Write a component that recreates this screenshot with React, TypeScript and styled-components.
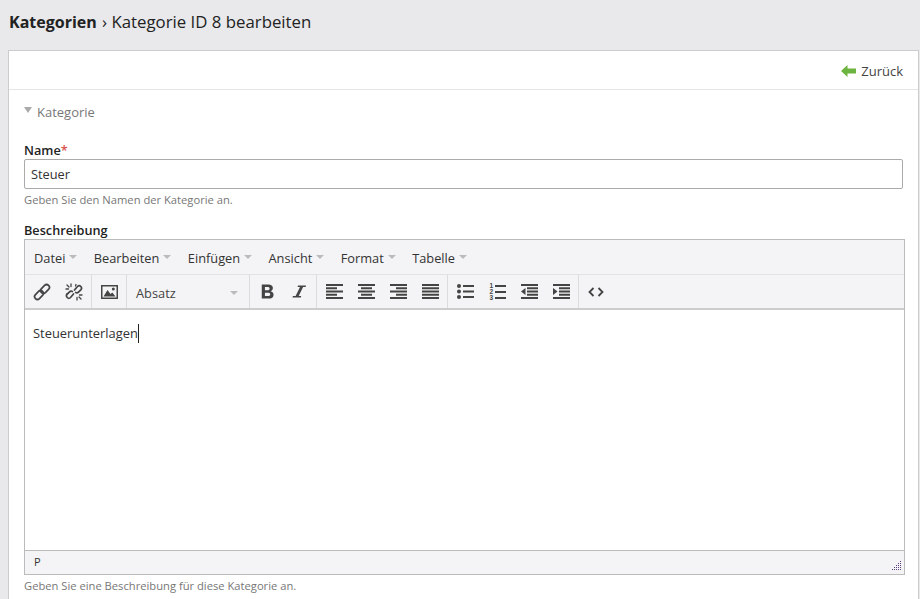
import React from 'react';
import styled, { createGlobalStyle } from 'styled-components';

const GlobalStyle = createGlobalStyle`
	html, body {
		margin: 0;
		padding: 0;
		height: 100%;
		overflow: hidden;
		background: #e9e9eb;
		font-family: "Open Sans", "Noto Sans", sans-serif;
		color: #333;
	}
`;

const Page = styled.div`
	height: 599px;
	overflow: hidden;
	padding: 0 1px 0 8px;
`;

const Title = styled.h1`
	margin: 0;
	height: 50px;
	padding: 11px 0 0 1px;
	box-sizing: border-box;
	font-size: 16.8px;
	line-height: 21px;
	font-weight: 400;
	color: #222;
	b {
		font-size: 16px;
		font-weight: 700;
		margin-right: 1px;
	}
`;

const Card = styled.div`
	background: #fff;
	border: 1px solid #ccc;
	border-bottom: 0;
	height: 549px;
`;

const ActionBar = styled.div`
	height: 36px;
	border-bottom: 1px solid #e5e5e5;
	display: flex;
	align-items: center;
	justify-content: flex-end;
	padding: 2px 15px 0 0;
`;

const BackLink = styled.a`
	display: flex;
	align-items: center;
	gap: 5px;
	font-size: 13px;
	color: #444;
`;

const Body = styled.div`
	padding: 0 15px;
`;

const Section = styled.div`
	display: flex;
	align-items: center;
	gap: 5px;
	height: 45px;
	box-sizing: border-box;
	padding-bottom: 2px;
	font-size: 13px;
	color: #777;
`;

const Caret = styled.span`
	width: 0;
	height: 0;
	border-left: 4px solid transparent;
	border-right: 4px solid transparent;
	border-top: 6px solid #aaa;
	margin-top: -4px;
`;

const Label = styled.label<{ $top: number }>`
	display: block;
	font-size: 12.7px;
	line-height: 16px;
	font-weight: 600;
	color: #222;
	height: 17px;
	margin-top: ${(p) => p.$top}px;
	em {
		color: #d9534f;
		font-style: normal;
	}
`;

const TextInput = styled.div`
	height: 28px;
	border: 1px solid #aaa;
	border-radius: 2px;
	padding: 0 6px;
	font-size: 12.8px;
	line-height: 28px;
	color: #333;
`;

const Help = styled.div`
	font-size: 11.2px;
	line-height: 14px;
	margin-top: 4px;
	color: #777;
`;

const Editor = styled.div`
	width: 881px;
	height: 336px;
	box-sizing: border-box;
	border: 1px solid #bbb;
	display: flex;
	flex-direction: column;
	background: #f4f4f6;
`;

const MenuBar = styled.div`
	height: 35px;
	flex: none;
	padding-top: 1px;
	box-sizing: border-box;
	border-bottom: 1px solid #e2e2e4;
	display: flex;
	align-items: center;
	padding-left: 9px;
	gap: 16.4px;
`;

const MenuItem = styled.span`
	display: flex;
	align-items: center;
	gap: 4px;
	font-size: 12.8px;
	color: #333;
	&::after {
		content: '';
		border-left: 4px solid transparent;
		border-right: 4px solid transparent;
		border-top: 4px solid #bbb;
		margin-top: -2px;
	}
`;

const ToolBar = styled.div`
	height: 35px;
	flex: none;
	box-sizing: border-box;
	border-bottom: 2px solid #ccc;
	display: flex;
	align-items: stretch;
`;

const Group = styled.div<{ $pad?: number }>`
	display: flex;
	align-items: center;
	padding: 0 ${(p) => p.$pad ?? 1}px;
	border-right: 1px solid #dcdcde;
	&:last-child {
		border-right: 0;
	}
`;

const ToolButton = styled.span`
	width: 32px;
	height: 32px;
	display: flex;
	align-items: center;
	justify-content: center;
	color: #444;
	svg {
		display: block;
		fill: currentColor;
	}
`;

const Select = styled.div`
	width: 122px;
	box-sizing: border-box;
	height: 32px;
	padding: 2px 11px 0 9px;
	display: flex;
	align-items: center;
	justify-content: space-between;
	font-size: 12.8px;
	color: #444;
	&::after {
		content: '';
		border-left: 4px solid transparent;
		border-right: 4px solid transparent;
		border-top: 4px solid #bbb;
	}
`;

const Content = styled.div`
	flex: 1;
	background: #fff;
	padding: 14px 8px;
	font-size: 12.9px;
	line-height: 18px;
	color: #333;
`;

const Cursor = styled.span`
	display: inline-block;
	width: 1px;
	height: 19px;
	background: #222;
	vertical-align: -5px;
`;

const StatusBar = styled.div`
	height: 24px;
	flex: none;
	box-sizing: border-box;
	border-top: 1px solid #bbb;
	padding: 0 9px 2px;
	font-size: 11px;
	display: flex;
	align-items: center;
	justify-content: space-between;
	color: #333;
`;

const Grip = styled.svg`
	align-self: flex-end;
	margin: 0 -7px 1px 0;
`;

const NumberDigit = styled.text`
	font-family: "Liberation Sans", sans-serif;
	font-size: 6.5px;
	font-weight: 700;
`;

const LinkIcon = () => (
	<svg width="18" height="18" viewBox="0 0 18 18" style={{ fill: 'none' }}>
		<g stroke="currentColor" strokeWidth="1.7">
			<rect x="1" y="9.2" width="10" height="5.6" rx="2.8" transform="rotate(-45 6 12)" />
			<rect x="7" y="3.2" width="10" height="5.6" rx="2.8" transform="rotate(-45 12 6)" />
		</g>
	</svg>
);

const UnlinkIcon = () => (
	<svg width="18" height="18" viewBox="0 0 18 18" style={{ fill: 'none' }}>
		<g stroke="currentColor" strokeLinecap="round">
			<path strokeWidth="1.7" d="M8.5 11 5.5 14.5a2.4 2.4 0 0 1-3.3 0 2.4 2.4 0 0 1 0-3.3l2.3-2.3a2.4 2.4 0 0 1 2.8-.4" />
			<path strokeWidth="1.7" d="M9.5 7l3-3.5a2.4 2.4 0 0 1 3.3 0 2.4 2.4 0 0 1 0 3.3l-2.3 2.3a2.4 2.4 0 0 1-2.8.4" />
			<path strokeWidth="1.3" d="M6 1v2.5M1 6h2.5M12 17v-2.5M17 12h-2.5M2 2l2 2M16 16l-2-2M11 1.5l-.5 1.5M1.5 11l1.5-.5" />
		</g>
	</svg>
);

const ImageIcon = () => (
	<svg width="17" height="14" viewBox="0 0 17 14">
		<path d="M0 0h17v14H0zM1.5 1.5v11h14v-11z" fillRule="evenodd" />
		<path d="M2.5 11.5 6.5 5l3 4 1.8-1.6L14.5 11.5z" />
		<circle cx="12.3" cy="4" r="1.5" />
	</svg>
);

// the four alignment icons only differ in where the short lines sit
const Lines = ({ bars }: { bars: [number, number][] }) => (
	<svg width="17" height="15" viewBox="0 0 17 15">
		{bars.map(([x, w], i) => (
			<rect key={i} x={x} y={i * 3.25} width={w} height="2" />
		))}
	</svg>
);

const BoldIcon = () => (
	<svg width="13" height="15" viewBox="1.5 0.6 10.8 12.8">
		<path
			fillRule="evenodd"
			d="M2 1h5.6c2.4 0 3.9 1.1 3.9 3 0 1.3-.8 2.3-2 2.7 1.6.3 2.6 1.4 2.6 3 0 2.2-1.7 3.3-4.2 3.3H2zM4.7 3.1v2.9h2.3c1.1 0 1.7-.5 1.7-1.5s-.6-1.4-1.7-1.4zM4.7 8v2.9h2.7c1.2 0 1.9-.5 1.9-1.5S8.6 8 7.4 8z"
		/>
	</svg>
);

const ItalicIcon = () => (
	<svg width="14" height="15" viewBox="0 0.6 14 12.8">
		<path d="M6 1h8l-.4 1.4h-2.5L6.7 11.6h2.5L8.800 13H.5l.4-1.4h2.700L8 2.400H5.600z" />
	</svg>
);

const BulletIcon = () => (
	<svg width="17" height="15" viewBox="0 0 17 15">
		<circle cx="2" cy="2" r="2" />
		<circle cx="2" cy="7.5" r="2" />
		<circle cx="2" cy="13" r="2" />
		<rect x="6" y="1" width="11" height="2" />
		<rect x="6" y="6.5" width="11" height="2" />
		<rect x="6" y="12" width="11" height="2" />
	</svg>
);

const NumberIcon = () => (
	<svg width="17" height="17" viewBox="0 0 17 17">
		<NumberDigit x="0.5" y="5">1</NumberDigit>
		<NumberDigit x="0.5" y="11">2</NumberDigit>
		<NumberDigit x="0.5" y="17">3</NumberDigit>
		<rect x="6" y="2" width="11" height="2" />
		<rect x="6" y="8" width="11" height="2" />
		<rect x="6" y="14" width="11" height="2" />
	</svg>
);

const IndentIcon = ({ out }: { out?: boolean }) => (
	<svg width="17" height="15" viewBox="0 0 17 15">
		<rect x="0" y="0" width="17" height="2" />
		<rect x="6" y="3.25" width="11" height="2" />
		<rect x="6" y="6.5" width="11" height="2" />
		<rect x="6" y="9.75" width="11" height="2" />
		<rect x="0" y="13" width="17" height="2" />
		<path d={out ? 'M4.5 4v7L0 7.5z' : 'M0 4v7l4.5-3.5z'} />
	</svg>
);

const CodeIcon = () => (
	<svg width="16" height="10" viewBox="0 0 16 10" style={{ fill: 'none' }}>
		<path d="M5.5 1 1.5 5l4 4M10.5 1l4 4-4 4" stroke="currentColor" strokeWidth="1.8" />
	</svg>
);

const menus = ['Datei', 'Bearbeiten', 'Einfügen', 'Ansicht', 'Format', 'Tabelle'];

const alignments: [number, number][][] = [
	[[0, 17], [0, 11], [0, 17], [0, 11], [0, 17]],
	[[0, 17], [3, 11], [0, 17], [3, 11], [0, 17]],
	[[0, 17], [6, 11], [0, 17], [6, 11], [0, 17]],
	[[0, 17], [0, 17], [0, 17], [0, 17], [0, 17]],
];

const gripDots = [
	[8, 0],
	[6, 2], [8, 2],
	[4, 4], [6, 4], [8, 4],
	[2, 6], [4, 6], [6, 6], [8, 6],
	[0, 8], [2, 8], [4, 8], [6, 8], [8, 8],
];

export default function App() {
	return (
		<Page>
			<GlobalStyle />
			<Title>
				<b>Kategorien</b> › Kategorie ID 8 bearbeiten
			</Title>
			<Card>
				<ActionBar>
					<BackLink>
						<svg width="15" height="12" viewBox="0 0 15 12">
							<path d="M0 6 6.5 0v3.5H15v5H6.5V12z" fill="#6db33f" />
						</svg>
						Zurück
					</BackLink>
				</ActionBar>
				<Body>
					<Section>
						<Caret />
						Kategorie
					</Section>
					<Label $top={7}>
						Name<em>*</em>
					</Label>
					<TextInput>Steuer</TextInput>
					<Help>Geben Sie den Namen der Kategorie an.</Help>
					<Label $top={15}>Beschreibung</Label>
					<Editor>
						<MenuBar>
							{menus.map((m) => (
								<MenuItem key={m}>{m}</MenuItem>
							))}
						</MenuBar>
						<ToolBar>
							<Group>
								<ToolButton><LinkIcon /></ToolButton>
								<ToolButton><UnlinkIcon /></ToolButton>
							</Group>
							<Group>
								<ToolButton><ImageIcon /></ToolButton>
							</Group>
							<Group $pad={0}>
								<Select>Absatz</Select>
							</Group>
							<Group>
								<ToolButton><BoldIcon /></ToolButton>
								<ToolButton><ItalicIcon /></ToolButton>
							</Group>
							<Group>
								{alignments.map((bars, i) => (
									<ToolButton key={i}><Lines bars={bars} /></ToolButton>
								))}
							</Group>
							<Group>
								<ToolButton><BulletIcon /></ToolButton>
								<ToolButton><NumberIcon /></ToolButton>
								<ToolButton><IndentIcon out /></ToolButton>
								<ToolButton><IndentIcon /></ToolButton>
							</Group>
							<Group>
								<ToolButton><CodeIcon /></ToolButton>
							</Group>
						</ToolBar>
						<Content>
							Steuerunterlagen<Cursor />
						</Content>
						<StatusBar>
							P
							<Grip width="10" height="10" viewBox="0 0 10 10">
								{gripDots.map(([x, y]) => (
									<rect key={`${x}-${y}`} x={x} y={y} width="1" height="1" fill="#5b3f80" />
								))}
							</Grip>
						</StatusBar>
					</Editor>
					<Help>Geben Sie eine Beschreibung für diese Kategorie an.</Help>
				</Body>
			</Card>
		</Page>
	);
}
